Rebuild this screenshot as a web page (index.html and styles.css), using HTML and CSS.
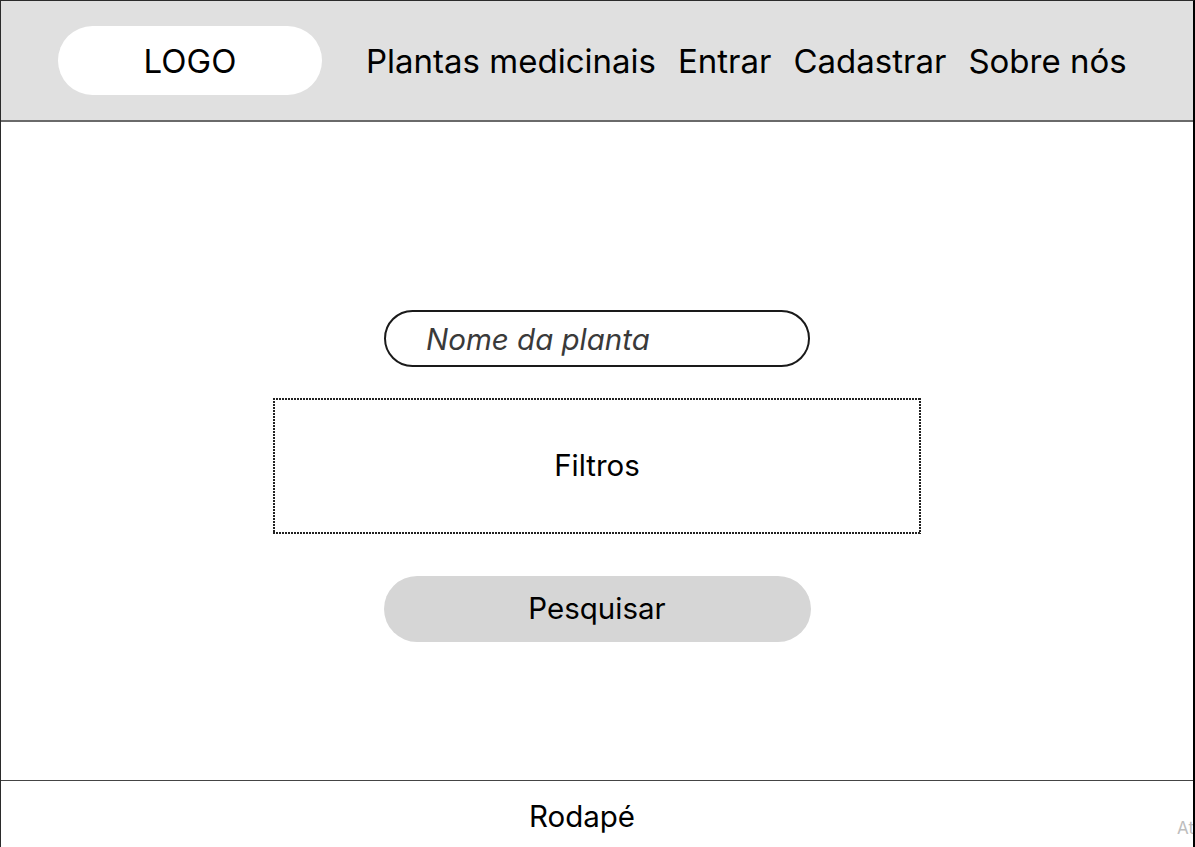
FILE: index.html
```html
<!DOCTYPE html>
<html lang="pt-BR">
    <head>
        <meta charset="UTF-8">
        <title>Plantas medicinais</title>
        <link rel="stylesheet" href="styles.css">
    </head>
    <body>

        <div class="frame">

            <div class="header">
                <div class="logo">LOGO</div>
                <ul class="nav">
                    <li><a href="#">Plantas medicinais</a></li>
                    <li><a href="#">Entrar</a></li>
                    <li><a href="#">Cadastrar</a></li>
                    <li><a href="#">Sobre nós</a></li>
                </ul>
            </div>

            <div class="content">
                <form action="#" method="get" class="search_form">
                    <input type="text" name="planta" class="search_input" placeholder="Nome da planta">
                    <div class="filters">Filtros</div>
                    <button type="submit" class="btn_search">Pesquisar</button>
                </form>
            </div>

            <div class="footer">
                <p>Rodapé</p>
            </div>

            <span class="stray_label">At</span>

        </div>

    </body>
</html>
```

FILE: styles.css
```css
* {
    margin: 0px;
    padding: 0px;
    box-sizing: border-box;
}

body {
    font-family: Inter, "Noto Sans", sans-serif;
    color: #000;
    background-color: white;
    overflow: hidden;
}

.frame {
    position: relative;
    width: 1195px;
    height: 847px;
    border-top: 1px solid #2b2b2b;
    border-left: 1px solid #2b2b2b;
    border-right: 2px solid #000;
    display: flex;
    flex-direction: column;
    overflow: hidden;
}

.header {
    height: 121px;
    flex-shrink: 0;
    background-color: #e0e0e0;
    border-bottom: 2px solid #6a6a6a;
    display: flex;
    align-items: center;
    padding-left: 57px;
}

.logo {
    width: 264px;
    height: 69px;
    border-radius: 35px;
    background-color: white;
    font-size: 33px;
    display: flex;
    align-items: center;
    justify-content: center;
}

.nav {
    list-style: none;
    display: flex;
    gap: 22px;
    margin-left: 44px;
}

.nav a {
    color: #000;
    text-decoration: none;
    font-size: 33px;
}

.content {
    flex: 1;
    padding-top: 188px;
}

.search_form {
    display: flex;
    flex-direction: column;
    align-items: center;
}

.search_input {
    width: 426px;
    height: 57px;
    border: 2px solid #1a1a1a;
    border-radius: 29px;
    padding-left: 40px;
    font-family: Inter, "Noto Sans", sans-serif;
    font-size: 29.5px;
    outline: none;
}

.search_input::placeholder {
    font-style: italic;
    color: #3a3a3a;
}

/* borda pontilhada desenhada com gradientes para imitar os tracinhos curtos */
.filters {
    width: 648px;
    height: 136px;
    margin-top: 31px;
    padding-bottom: 3px;
    font-size: 29.5px;
    display: flex;
    align-items: center;
    justify-content: center;
    background:
        linear-gradient(to right, #222 2px, transparent 2px) top left / 3px 2px repeat-x,
        linear-gradient(to right, #222 2px, transparent 2px) bottom left / 3px 2px repeat-x,
        linear-gradient(to bottom, #222 2px, transparent 2px) top left / 2px 3px repeat-y,
        linear-gradient(to bottom, #222 2px, transparent 2px) top right / 2px 3px repeat-y;
}

.btn_search {
    width: 427px;
    height: 66px;
    margin-top: 42px;
    padding-bottom: 2px;
    border: none;
    border-radius: 33px;
    background-color: #d6d6d6;
    font-family: Inter, "Noto Sans", sans-serif;
    font-size: 29.5px;
    color: #000;
}

.footer {
    height: 67px;
    flex-shrink: 0;
    border-top: 1px solid #444;
    display: flex;
    justify-content: center;
    padding-right: 30px;
    padding-top: 17px;
    font-size: 29.5px;
}

.stray_label {
    position: absolute;
    left: 1176px;
    top: 817px;
    font-size: 17px;
    color: #bdbdbd;
}
```
